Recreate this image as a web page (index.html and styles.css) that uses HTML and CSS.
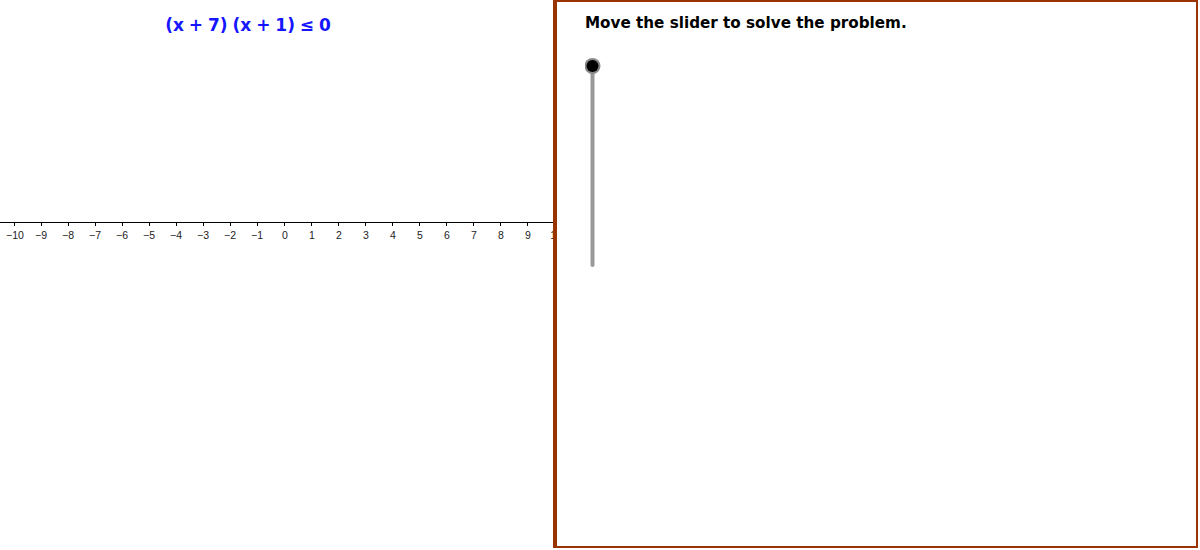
FILE: index.html
```html
<!DOCTYPE html>
<html>
<head>
<meta charset="utf-8">
<link rel="stylesheet" href="styles.css">
</head>
<body>
<div class="app">
  <div class="graphics">
    <div class="formula">(x + 7) (x + 1) ≤ 0</div>
    <svg class="axis" width="553" height="550" viewBox="0 0 553 550">
      <line x1="0" y1="222.5" x2="553" y2="222.5" stroke="#000" stroke-width="1"/>
      <g stroke="#000" stroke-width="1">
        <line x1="14.5" y1="222" x2="14.5" y2="226"/>
        <line x1="41.5" y1="222" x2="41.5" y2="226"/>
        <line x1="68.5" y1="222" x2="68.5" y2="226"/>
        <line x1="95.5" y1="222" x2="95.5" y2="226"/>
        <line x1="122.5" y1="222" x2="122.5" y2="226"/>
        <line x1="149.5" y1="222" x2="149.5" y2="226"/>
        <line x1="176.5" y1="222" x2="176.5" y2="226"/>
        <line x1="203.5" y1="222" x2="203.5" y2="226"/>
        <line x1="230.5" y1="222" x2="230.5" y2="226"/>
        <line x1="257.5" y1="222" x2="257.5" y2="226"/>
        <line x1="284.5" y1="222" x2="284.5" y2="226"/>
        <line x1="311.5" y1="222" x2="311.5" y2="226"/>
        <line x1="338.5" y1="222" x2="338.5" y2="226"/>
        <line x1="365.5" y1="222" x2="365.5" y2="226"/>
        <line x1="392.5" y1="222" x2="392.5" y2="226"/>
        <line x1="419.5" y1="222" x2="419.5" y2="226"/>
        <line x1="446.5" y1="222" x2="446.5" y2="226"/>
        <line x1="473.5" y1="222" x2="473.5" y2="226"/>
        <line x1="500.5" y1="222" x2="500.5" y2="226"/>
        <line x1="527.5" y1="222" x2="527.5" y2="226"/>
        <line x1="554.5" y1="222" x2="554.5" y2="226"/>
      </g>
      <g class="ticks" text-anchor="middle">
        <text x="15" y="239">−10</text>
        <text x="41" y="239">−9</text>
        <text x="68" y="239">−8</text>
        <text x="95" y="239">−7</text>
        <text x="122" y="239">−6</text>
        <text x="149" y="239">−5</text>
        <text x="176" y="239">−4</text>
        <text x="203" y="239">−3</text>
        <text x="230" y="239">−2</text>
        <text x="257" y="239">−1</text>
        <text x="285" y="239">0</text>
        <text x="312" y="239">1</text>
        <text x="339" y="239">2</text>
        <text x="366" y="239">3</text>
        <text x="393" y="239">4</text>
        <text x="420" y="239">5</text>
        <text x="447" y="239">6</text>
        <text x="474" y="239">7</text>
        <text x="501" y="239">8</text>
        <text x="528" y="239">9</text>
        <text x="556" y="239">10</text>
      </g>
    </svg>
  </div>
  <div class="panel">
    <div class="prompt">Move the slider to solve the problem.</div>
    <svg class="slider" width="20" height="220" viewBox="0 0 20 220">
      <line x1="7.5" y1="15" x2="7.5" y2="214" stroke="#999" stroke-width="4" stroke-linecap="round"/>
      <circle cx="7.5" cy="15" r="8" fill="#888"/>
      <circle cx="7.5" cy="15" r="6" fill="#000"/>
    </svg>
  </div>
</div>
</body>
</html>
```

FILE: styles.css
```css
html, body {
  margin: 0;
  padding: 0;
  background: #fff;
}
.app {
  display: flex;
  width: 1200px;
  height: 550px;
}
.graphics {
  position: relative;
  width: 553px;
  height: 550px;
  overflow: hidden;
  flex: none;
}
.axis {
  display: block;
}
.ticks {
  font-family: "Liberation Sans", Arial, sans-serif;
  font-size: 10.5px;
  fill: #222;
}
.formula {
  position: absolute;
  top: 15px;
  left: 0;
  width: 496px;
  text-align: center;
  font-family: "DejaVu Sans", sans-serif;
  font-weight: bold;
  font-size: 17px;
  color: #1515ff;
  word-spacing: -1px;
}
.panel {
  box-sizing: border-box;
  width: 645px;
  height: 548px;
  border-left: 4px solid #993300;
  border-top: 2px solid #993300;
  border-right: 2px solid #993300;
  border-bottom: 2px solid #993300;
  padding: 12px 0 0 28px;
  flex: none;
}
.prompt {
  font-family: "DejaVu Sans", sans-serif;
  font-weight: bold;
  font-size: 15.2px;
  line-height: 18px;
  color: #000;
}
.slider {
  display: block;
  margin: 19px 0 0 0;
}
```
